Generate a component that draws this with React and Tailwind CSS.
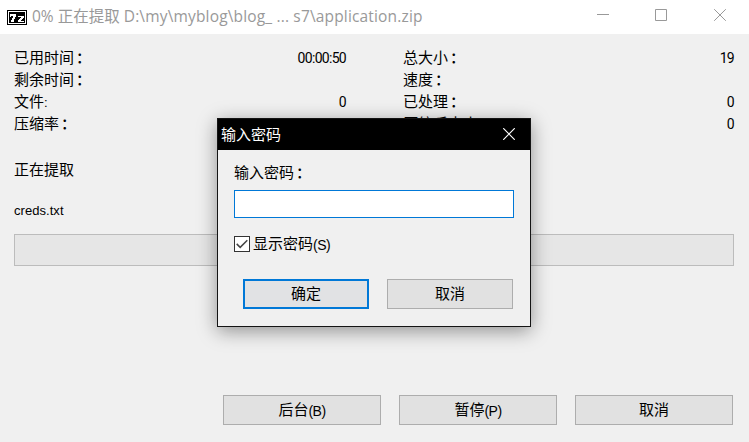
const cjk = 'font-["Liberation_Sans","Noto_Sans_CJK_SC",sans-serif]';

function Label({ children }) {
  return (
    <span className="text-[15px]">
      {children}
      <span className="ml-[2px] font-medium">：</span>
    </span>
  );
}

function Row({ label, value, ascii }) {
  return (
    <div className="flex h-[22px] items-center justify-between whitespace-nowrap leading-[22px]">
      {ascii ? (
        <span className="text-[15px]">
          {label}
          <span className="text-[13px]">:</span>
        </span>
      ) : (
        <Label>{label}</Label>
      )}
      <span className='font-["Roboto",sans-serif] text-[14px] tracking-[-0.7px]'>{value}</span>
    </div>
  );
}

function Button({ children, hint, primary, className }) {
  return (
    <button
      className={`flex h-[30px] items-center justify-center whitespace-nowrap text-[15px] leading-[28px] ${
        primary ? "border-2 border-[#0078d7] bg-[#e1e2e4]" : "border border-[#adadad] bg-[#e1e1e1]"
      } ${className}`}
    >
      {children}
      {hint && <span className="pt-[2px] text-[14px] tracking-[-0.5px]">{hint}</span>}
    </button>
  );
}

function AppIcon() {
  return (
    <svg width="20" height="15" viewBox="0 0 20 15" shapeRendering="crispEdges">
      <path fill="#000" d="M0 0h20v15H0z" />
      <path fill="#fff" d="M1 1h18v1H1zM1 13h18v1H1zM1 1h1v13H1zM18 1h1v13h-1z" />
      <path
        fill="#fff"
        d="M3 4h6v3H8v2H7v3H4v-2h1V8h1V6H4v1H3zM11 6h6v2h-1v1h-1v1h-1v1h3v1h-6v-2h1V9h1V8h1V7h-3z"
      />
    </svg>
  );
}

function PasswordDialog() {
  return (
    <section className="absolute left-[217px] top-[118px] flex h-[209px] w-[314px] flex-col border border-[#141414] bg-[#f0f0f0] shadow-[0_4px_18px_rgba(0,0,0,0.4)]">
      <header className="flex h-[31px] items-center justify-between bg-black pl-[3px] pr-[15px] text-[15px] leading-[31px] text-white">
        <span>输入密码</span>
        <svg className="-mt-[2px]" width="12" height="12" viewBox="0 0 12 12" stroke="#fff" strokeWidth="1.2">
          <path d="M.2.2l11.6 11.6M11.8.2L.2 11.8" />
        </svg>
      </header>
      <div className="flex flex-col px-4 pt-[12px]">
        <div className="h-[22px] leading-[22px]">
          <Label>输入密码</Label>
        </div>
        <input className="mt-[6px] h-[28px] w-[280px] border border-[#0078d7] bg-white outline-none" />
        <label className="mt-[15px] flex h-[22px] items-center text-[15px] leading-[22px]">
          <span className="mr-[3px] flex size-4 items-center justify-center border border-[#333] bg-white">
            <svg width="12" height="10" viewBox="0 0 12 10" fill="none" stroke="#444" strokeWidth="1.5">
              <path d="M.7 4.9l3.5 3.5L11.3 1.3" />
            </svg>
          </span>
          显示密码
          <span className="pt-[2px] text-[14px] tracking-[-0.5px]">(S)</span>
        </label>
        <div className="mt-[24px] flex gap-[18px] pl-[9px]">
          <Button primary className="w-[126px]">确定</Button>
          <Button className="w-[126px]">取消</Button>
        </div>
      </div>
    </section>
  );
}

export default function App() {
  return (
    <main className={`relative flex h-[442px] w-[749px] flex-col overflow-hidden bg-[#f0f0f0] text-black ${cjk}`}>
      <header className="flex h-[34px] items-center bg-white pl-[7px] pr-[23px]">
        <AppIcon />
        <h1 className='-mt-[3px] ml-[5px] flex-1 whitespace-nowrap font-["Open_Sans","Noto_Sans_CJK_SC",sans-serif] text-[15.5px] leading-[30px] text-[#999]'>
          0% 正在提取 <span className="tracking-[0.16px]">D:\my\myblog\blog_ ... s7\application.zip</span>
        </h1>
        <svg className="-mt-[4px]" width="129" height="12" viewBox="0 0 129 12" fill="none" stroke="#999">
          <path d="M0 5.5h12M58.5.5h11v11h-11zM117.2.2l11.6 11.6M128.8.2L117.2 11.8" />
        </svg>
      </header>
      <div className="flex flex-col px-[14px] pt-[13px]">
        <div className="flex gap-[57px] pr-px">
          <div className="w-[332px]">
            <Row label="已用时间" value="00:00:50" />
            <Row label="剩余时间" />
            <Row label="文件" value="0" ascii />
            <Row label="压缩率" />
          </div>
          <div className="w-[331px]">
            <Row label="总大小" value="19" />
            <Row label="速度" />
            <Row label="已处理" value="0" />
            <Row label="压缩后大小" value="0" />
          </div>
        </div>
        <p className="mt-[24px] text-[15px] leading-[22px]">正在提取</p>
        <p className="mt-[19px] text-[13px] leading-[22px] tracking-[0.05px]">creds.txt</p>
        <div className="mr-px mt-[12px] h-[32px] border border-[#bcbcbc] bg-[#e6e6e6]" />
      </div>
      <footer className="mt-auto flex justify-end gap-[18px] pb-[17px] pr-[16px]">
        <Button hint="(B)" className="w-[158px]">后台</Button>
        <Button hint="(P)" className="w-[158px]">暂停</Button>
        <Button className="w-[158px]">取消</Button>
      </footer>
      <PasswordDialog />
    </main>
  );
}
